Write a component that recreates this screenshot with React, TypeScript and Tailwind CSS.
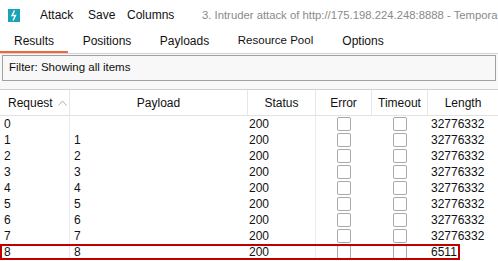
import React from 'react';

const rows = [
  { req: '0', payload: '', status: '200', length: '32776332' },
  { req: '1', payload: '1', status: '200', length: '32776332' },
  { req: '2', payload: '2', status: '200', length: '32776332' },
  { req: '3', payload: '3', status: '200', length: '32776332' },
  { req: '4', payload: '4', status: '200', length: '32776332' },
  { req: '5', payload: '5', status: '200', length: '32776332' },
  { req: '6', payload: '6', status: '200', length: '32776332' },
  { req: '7', payload: '7', status: '200', length: '32776332' },
  { req: '8', payload: '8', status: '200', length: '6511' },
];

function Checkbox() {
  return <div className="w-[14px] h-[14px] rounded-[2px] border border-[#a8a8a8] bg-white" />;
}

function Logo() {
  return (
    <div className="w-[12px] h-[13px] bg-[#1aa3b8] flex items-center justify-center">
      <svg width="8" height="11" viewBox="0 0 8 11">
        <path d="M4.5 0.5 L2 5.5 L5.5 5.5 L3 10.5" fill="none" stroke="white" strokeWidth="1.4" />
      </svg>
    </div>
  );
}

export default function App() {
  const tabs = [
    { label: 'Results', w: 'w-[68px]', active: true },
    { label: 'Positions', w: 'w-[78px]' },
    { label: 'Payloads', w: 'w-[77px]' },
    { label: 'Resource Pool', w: 'w-[105px]' },
    { label: 'Options', w: 'w-[70px]' },
  ];

  return (
    <div className="w-[498px] h-[261px] overflow-hidden bg-white text-[12px] text-[#111] font-['Liberation_Sans',sans-serif]">
      <div className="h-[30px] flex items-center whitespace-nowrap">
        <div className="w-[40px] pl-[8px] pt-[1px]">
          <Logo />
        </div>
        <span className="w-[48px]">Attack</span>
        <span className="w-[39px]">Save</span>
        <span className="w-[75px]">Columns</span>
        <div className="flex-1 overflow-hidden">
          <span className="text-[11.3px] text-[#8a8a8a]">3. Intruder attack of http://175.198.224.248:8888 - Temporary attack</span>
        </div>
      </div>

      <div className="h-[24px] flex border-b border-[#d4d4d4]">
        {tabs.map((t) => (
          <div
            key={t.label}
            className={`${t.w} h-full flex items-start pt-[2px] justify-center whitespace-nowrap ${
              t.label === 'Resource Pool' ? 'text-[11.5px]' : ''
            } ${t.active ? 'border-b-2 border-[#f0673a]' : ''}`}
          >
            {t.label}
          </div>
        ))}
      </div>

      <div className="bg-[#f8f8f8] pt-[1px] px-[2px] h-[35px]">
        <div className="h-[26px] border border-[#a0a0a0] bg-[#f8f8f8] flex items-center pl-[6px] text-[11.5px]">
          Filter: Showing all items
        </div>
      </div>

      <div className="border-t border-[#cfcfcf]">
        <div className="h-[26px] flex border-b border-[#e2e2e2] bg-white">
          <div className="w-[70px] flex items-center pl-[8px] pt-[1px] gap-[5px] border-r border-[#e6e6e6]">
            Request
            <svg width="9" height="6" viewBox="0 0 9 6">
              <path d="M0.5 5.5 L4.5 1 L8.5 5.5" fill="none" stroke="#b0b0b0" strokeWidth="1" />
            </svg>
          </div>
          <div className="w-[178px] flex items-center justify-center pt-[1px] border-r border-[#e6e6e6]">Payload</div>
          <div className="w-[68px] flex items-center justify-center pt-[1px] border-r border-[#e6e6e6]">Status</div>
          <div className="w-[56px] flex items-center justify-center pt-[1px] border-r border-[#e6e6e6]">Error</div>
          <div className="w-[56px] flex items-center justify-center pt-[1px] border-r border-[#e6e6e6]">Timeout</div>
          <div className="w-[70px] flex items-center justify-center pt-[1px]">Length</div>
        </div>

        {rows.map((r, i) => (
          <div key={r.req} className="relative h-[16px] flex items-center">
            <div className="w-[70px] h-full flex items-center pl-[4px] border-r border-[#ececec]">{r.req}</div>
            <div className="w-[178px] h-full flex items-center pl-[4px]">{r.payload}</div>
            <div className="w-[68px] h-full flex items-center pl-[1px] border-r border-[#ececec]">{r.status}</div>
            <div className="w-[56px] h-full flex items-start justify-center pt-[1px]">
              <Checkbox />
            </div>
            <div className="w-[56px] h-full flex items-start justify-center pt-[1px]">
              <Checkbox />
            </div>
            <div className="w-[70px] h-full flex items-center pl-[3px]">{r.length}</div>
            {i === rows.length - 1 && (
              <div className="absolute left-0 top-0 w-[460px] h-[16px] border-2 border-[#c00000]" />
            )}
          </div>
        ))}
      </div>
    </div>
  );
}
